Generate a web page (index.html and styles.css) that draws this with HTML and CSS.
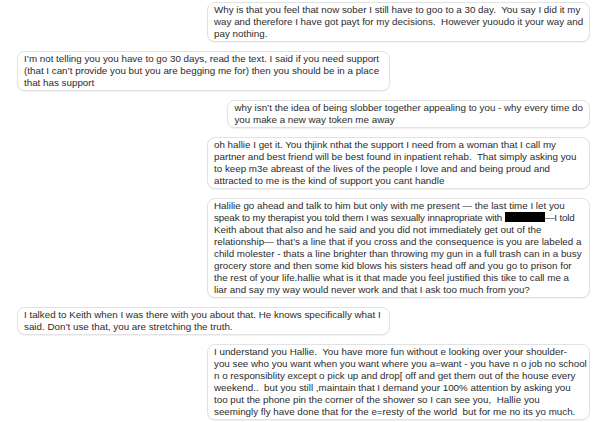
FILE: index.html
```html
<!DOCTYPE html>
<html>
<head>
<meta charset="utf-8">
<link rel="stylesheet" href="styles.css">
</head>
<body>
<div class="thread">
  <div class="bubble right wide">Why is that you feel that now sober I still have to goo to a 30 day.  You say I did it my<br>way and therefore I have got payt for my decisions.  However yuoudo it your way and<br>pay nothing.</div>
  <div class="bubble left">I’m not telling you you have to go 30 days, read the text. I said if you need support<br>(that I can’t provide you but you are begging me for) then you should be in a place<br>that has support</div>
  <div class="bubble right">why isn’t the idea of being slobber together appealing to you - why every time do<br>you make a new way token me away</div>
  <div class="bubble right wide">oh hallie I get it. You thjink nthat the support I need from a woman that I call my<br>partner and best friend will be best found in inpatient rehab.  That simply asking you<br>to keep m3e abreast of the lives of the people I love and and being proud and<br>attracted to me is the kind of support you cant handle</div>
  <div class="bubble right wide">Halilie go ahead and talk to him but only with me present — the last time I let you<br><span class="squeeze">speak to my therapist you told them I was sexually innapropriate with <span class="redact"></span>—I told</span><br>Keith about that also and he said and you did not immediately get out of the<br>relationship— that’s a line that if you cross and the consequence is you are labeled a<br>child molester - thats a line brighter than throwing my gun in a full trash can in a busy<br>grocery store and then some kid blows his sisters head off and you go to prison for<br>the rest of your life.hallie what is it that made you feel justified this tike to call me a<br>liar and say my way would never work and that I ask too much from you?</div>
  <div class="bubble left">I talked to Keith when I was there with you about that. He knows specifically what I<br>said. Don’t use that, you are stretching the truth.</div>
  <div class="bubble right wide">I understand you Hallie.  You have more fun without e looking over your shoulder-<br>you see who you want when you want where you a=want - you have n o job no school<br>n o responsiblity except o pick up and drop[ off and get them out of the house every<br>weekend..  but you still ,maintain that I demand your 100% attention by asking you<br>too put the phone pin the corner of the shower so I can see you,  Hallie you<br>seemingly fly have done that for the e=resty of the world  but for me no its yo much.</div>
</div>
</body>
</html>
```
FILE: styles.css
```css
html, body {
  margin: 0;
  padding: 0;
  background: #ffffff;
}
body {
  width: 600px;
  height: 422px;
  overflow: hidden;
  font-family: "Liberation Sans", Arial, sans-serif;
  font-size: 9.8px;
  line-height: 12px;
  color: #2b2b2b;
}
.thread {
  display: flex;
  flex-direction: column;
  gap: 9px;
  padding-top: 2px;
}
.bubble {
  box-sizing: border-box;
  white-space: pre;
  background: #ffffff;
  border: 1px solid #e2e2e2;
  border-radius: 8px;
  box-shadow: 0 1px 1px rgba(0, 0, 0, 0.06);
  padding: 1px 6px 1px 6px;
}
.right {
  align-self: flex-end;
  margin-right: 10px;
}
.wide {
  width: 383px;
}
.left {
  align-self: flex-start;
  margin-left: 17px;
  width: 373px;
}
.squeeze {
  letter-spacing: -0.15px;
}
.redact {
  display: inline-block;
  width: 40px;
  height: 10px;
  background: #000;
  vertical-align: -1px;
}
```
